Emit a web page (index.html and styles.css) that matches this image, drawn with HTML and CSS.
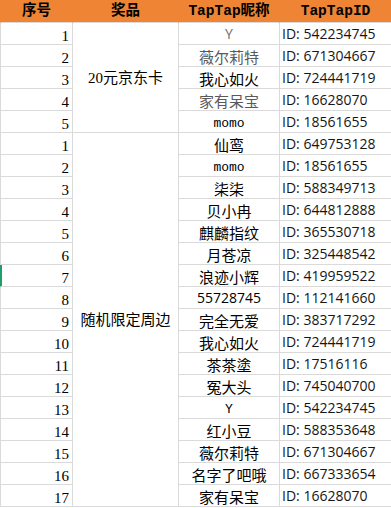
FILE: index.html
```html
<!DOCTYPE html>
<html lang="zh">
<head>
<meta charset="utf-8">
<title>中奖名单</title>
<link rel="stylesheet" href="styles.css">
</head>
<body>
<table class="sheet">
  <thead>
    <tr>
      <th class="c1">序号</th>
      <th class="c2">奖品</th>
      <th class="c3">TapTap昵称</th>
      <th class="c4">TapTapID</th>
    </tr>
  </thead>
  <tbody>
    <tr><td class="num">1</td><td class="prize" rowspan="5">20元京东卡</td><td class="nick sans gray">Y</td><td class="id">ID: 542234745</td></tr>
    <tr><td class="num">2</td><td class="nick gray">薇尔莉特</td><td class="id">ID: 671304667</td></tr>
    <tr><td class="num">3</td><td class="nick">我心如火</td><td class="id">ID: 724441719</td></tr>
    <tr><td class="num">4</td><td class="nick gray">家有呆宝</td><td class="id">ID: 16628070</td></tr>
    <tr><td class="num">5</td><td class="nick mono">momo</td><td class="id">ID: 18561655</td></tr>
    <tr><td class="num">1</td><td class="prize" rowspan="17">随机限定周边</td><td class="nick">仙鸾</td><td class="id">ID: 649753128</td></tr>
    <tr><td class="num">2</td><td class="nick mono">momo</td><td class="id">ID: 18561655</td></tr>
    <tr><td class="num">3</td><td class="nick">柒柒</td><td class="id">ID: 588349713</td></tr>
    <tr><td class="num">4</td><td class="nick">贝小冉</td><td class="id">ID: 644812888</td></tr>
    <tr><td class="num">5</td><td class="nick">麒麟指纹</td><td class="id">ID: 365530718</td></tr>
    <tr><td class="num">6</td><td class="nick">月苍凉</td><td class="id">ID: 325448542</td></tr>
    <tr><td class="num sel">7</td><td class="nick">浪迹小辉</td><td class="id">ID: 419959522</td></tr>
    <tr><td class="num">8</td><td class="nick sans">55728745</td><td class="id">ID: 112141660</td></tr>
    <tr><td class="num">9</td><td class="nick">完全无爱</td><td class="id">ID: 383717292</td></tr>
    <tr><td class="num">10</td><td class="nick">我心如火</td><td class="id">ID: 724441719</td></tr>
    <tr><td class="num">11</td><td class="nick">茶茶塗</td><td class="id">ID: 17516116</td></tr>
    <tr><td class="num">12</td><td class="nick">冤大头</td><td class="id">ID: 745040700</td></tr>
    <tr><td class="num">13</td><td class="nick mono">Y</td><td class="id">ID: 542234745</td></tr>
    <tr><td class="num">14</td><td class="nick">红小豆</td><td class="id">ID: 588353648</td></tr>
    <tr><td class="num">15</td><td class="nick">薇尔莉特</td><td class="id">ID: 671304667</td></tr>
    <tr><td class="num">16</td><td class="nick">名字了吧哦</td><td class="id">ID: 667333654</td></tr>
    <tr><td class="num">17</td><td class="nick">家有呆宝</td><td class="id">ID: 16628070</td></tr>
  </tbody>
</table>
</body>
</html>
```
FILE: styles.css
```css
html, body {
  margin: 0;
  padding: 0;
  background: #ffffff;
  overflow: hidden;
}

.sheet {
  border-collapse: separate;
  border-spacing: 0;
  table-layout: fixed;
  width: 391px;
  font-family: "Liberation Serif", "Noto Sans CJK SC", serif;
  font-size: 15px;
  color: #000;
}

.sheet th,
.sheet td {
  box-sizing: border-box;
  padding: 0;
  white-space: nowrap;
  overflow: hidden;
}

.sheet th {
  height: 23px;
  background: #ee8434;
  border-right: 1px solid #ee8434;
  border-bottom: 1px solid #dadada;
  font-family: "Liberation Mono", "Noto Sans CJK SC", monospace;
  font-size: 14.5px;
  font-weight: bold;
  line-height: 22px;
  text-align: center;
  vertical-align: middle;
}

.sheet th.c1 { width: 73px; border-left: 1px solid #ee8434; }
.sheet th.c2 { width: 106px; }
.sheet th.c3 { width: 101px; }
.sheet th.c4 { width: 111px; border-right: 0; }

.sheet td {
  height: 22px;
  border-right: 1px solid #dadada;
  border-bottom: 1px solid #dadada;
  vertical-align: bottom;
}

.num {
  border-left: 1px solid #dadada;
  text-align: right;
  padding-right: 3px !important;
  line-height: 15px;
}

.num.sel {
  border-left-color: #1e9f6a;
  box-shadow: inset 1px 0 0 #1e9f6a;
}

.prize {
  text-align: center;
  vertical-align: middle !important;
  line-height: 20px;
}

.nick {
  text-align: center;
  line-height: 16px;
}

.nick.gray { color: #595959; }

.nick.mono {
  font-family: "Liberation Mono", monospace;
  font-size: 13px;
  line-height: 16px;
}

.nick.sans {
  font-family: "Open Sans", sans-serif;
  font-size: 14px;
  vertical-align: middle;
  line-height: 21px;
}

.nick.sans.gray { color: #6d6d6d; }

.id {
  border-right: 0 !important;
  font-family: "Open Sans", sans-serif;
  font-size: 14px;
  color: #161616;
  text-align: left;
  padding-left: 2px !important;
  vertical-align: middle !important;
  line-height: 21px;
}
```
